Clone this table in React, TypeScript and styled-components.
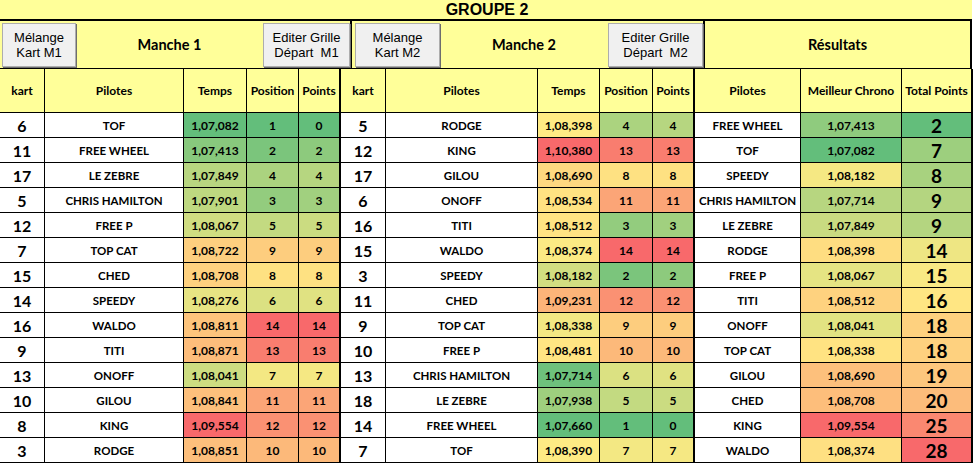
import React from 'react'
import styled, { createGlobalStyle } from 'styled-components'

type RGB = [number, number, number]
const GREEN: RGB = [99, 190, 123]
const YELLOW: RGB = [255, 235, 132]
const RED: RGB = [248, 105, 107]

// Excel-like 3 colour scale (min green, median yellow, max red)
const colorScale = (values: number[]) => {
  const s = [...values].sort((a, b) => a - b)
  const min = s[0]
  const max = s[s.length - 1]
  const idx = (s.length - 1) * 0.5
  const lo = Math.floor(idx)
  const mid = s[lo] + (s[Math.ceil(idx)] - s[lo]) * (idx - lo)
  const mix = (a: RGB, b: RGB, t: number) =>
    `rgb(${a.map((c, i) => Math.round(c + (b[i] - c) * t)).join(',')})`
  return (v: number) => {
    if (v <= mid) return mix(GREEN, YELLOW, mid === min ? 1 : (v - min) / (mid - min))
    return mix(YELLOW, RED, max === mid ? 0 : (v - mid) / (max - mid))
  }
}

const toSec = (t: string) => {
  const [m, s, ms] = t.split(',').map(Number)
  return m * 60 + s + ms / 1000
}

type Run = [number, string, string, number, number]

const manche1: Run[] = [
  [6, 'TOF', '1,07,082', 1, 0],
  [11, 'FREE WHEEL', '1,07,413', 2, 2],
  [17, 'LE ZEBRE', '1,07,849', 4, 4],
  [5, 'CHRIS HAMILTON', '1,07,901', 3, 3],
  [12, 'FREE P', '1,08,067', 5, 5],
  [7, 'TOP CAT', '1,08,722', 9, 9],
  [15, 'CHED', '1,08,708', 8, 8],
  [14, 'SPEEDY', '1,08,276', 6, 6],
  [16, 'WALDO', '1,08,811', 14, 14],
  [9, 'TITI', '1,08,871', 13, 13],
  [13, 'ONOFF', '1,08,041', 7, 7],
  [10, 'GILOU', '1,08,841', 11, 11],
  [8, 'KING', '1,09,554', 12, 12],
  [3, 'RODGE', '1,08,851', 10, 10],
]

const manche2: Run[] = [
  [5, 'RODGE', '1,08,398', 4, 4],
  [12, 'KING', '1,10,380', 13, 13],
  [17, 'GILOU', '1,08,690', 8, 8],
  [6, 'ONOFF', '1,08,534', 11, 11],
  [16, 'TITI', '1,08,512', 3, 3],
  [15, 'WALDO', '1,08,374', 14, 14],
  [3, 'SPEEDY', '1,08,182', 2, 2],
  [11, 'CHED', '1,09,231', 12, 12],
  [9, 'TOP CAT', '1,08,338', 9, 9],
  [10, 'FREE P', '1,08,481', 10, 10],
  [13, 'CHRIS HAMILTON', '1,07,714', 6, 6],
  [18, 'LE ZEBRE', '1,07,938', 5, 5],
  [14, 'FREE WHEEL', '1,07,660', 1, 0],
  [7, 'TOF', '1,08,390', 7, 7],
]

const results: [string, string, number][] = [
  ['FREE WHEEL', '1,07,413', 2],
  ['TOF', '1,07,082', 7],
  ['SPEEDY', '1,08,182', 8],
  ['CHRIS HAMILTON', '1,07,714', 9],
  ['LE ZEBRE', '1,07,849', 9],
  ['RODGE', '1,08,398', 14],
  ['FREE P', '1,08,067', 15],
  ['TITI', '1,08,512', 16],
  ['ONOFF', '1,08,041', 18],
  ['TOP CAT', '1,08,338', 18],
  ['GILOU', '1,08,690', 19],
  ['CHED', '1,08,708', 20],
  ['KING', '1,09,554', 25],
  ['WALDO', '1,08,374', 28],
]

const runScales = (runs: Run[]) => ({
  time: colorScale(runs.map(r => toSec(r[2]))),
  pos: colorScale(runs.map(r => r[3])),
  pts: colorScale(runs.map(r => r[4])),
})

const GlobalStyle = createGlobalStyle`
  body {
    margin: 0;
    background: #fff;
    font-family: Lato, "Liberation Sans", sans-serif;
    color: #000;
  }
`

const Page = styled.div`
  width: 972px;
`

const TitleBar = styled.div`
  height: 21px;
  box-sizing: border-box;
  background: #ffff99;
  border-bottom: 2px solid #000;
  display: flex;
  align-items: center;
  justify-content: center;
  font-family: "Liberation Sans", Arial, sans-serif;
  font-weight: bold;
  font-size: 16px;
  padding-left: 2px;
`

const ButtonBar = styled.div`
  height: 48px;
  box-sizing: border-box;
  display: flex;
  background: #ffff99;
  border-bottom: 1px solid #000;
`

const Section = styled.div<{ $w: number }>`
  width: ${p => p.$w}px;
  box-sizing: border-box;
  display: flex;
  align-items: center;
  border-right: 2px solid #000;
`

const SheetButton = styled.button<{ $w: number; $ml?: number }>`
  width: ${p => p.$w}px;
  margin-left: ${p => p.$ml ?? 0}px;
  height: 44px;
  flex: none;
  padding: 0;
  background: #f0f0f0;
  border: 1px solid #adadad;
  box-shadow: 1px 1px 0 #6d6d6d;
  font-family: "Liberation Sans", Arial, sans-serif;
  font-size: 13px;
  line-height: 15px;
  color: #000;
  white-space: pre;
  text-align: center;
`

const SectionLabel = styled.div`
  flex: 1;
  text-align: center;
  font-weight: bold;
  font-size: 14.5px;
`

const Grid = styled.div`
  display: grid;
  grid-template-columns: 45px 139px 63px 52px 42px 45px 152px 62px 53px 42px 106px 101px 71px;
  grid-template-rows: 44px;
  grid-auto-rows: 25px;
`

const Cell = styled.div<{ $bg?: string; $thick?: boolean; $size?: number }>`
  box-sizing: border-box;
  display: flex;
  align-items: center;
  justify-content: center;
  padding-top: 1px;
  background: ${p => p.$bg ?? '#fff'};
  border-right: ${p => (p.$thick ? 2 : 1)}px solid #000;
  border-bottom: 1px solid #000;
  font-weight: bold;
  font-size: ${p => p.$size ?? 12}px;
  white-space: nowrap;
  overflow: hidden;
`

const HeadCell = styled(Cell)`
  background: #ffff99;
  font-size: 12px;
  padding-top: 0;
`

const Name = styled(Cell)`
  font-size: 11.5px;
`

const headers = ['kart', 'Pilotes', 'Temps', 'Position', 'Points']

const App = () => {
  const s1 = runScales(manche1)
  const s2 = runScales(manche2)
  const bestScale = colorScale(results.map(r => toSec(r[1])))
  const totalScale = colorScale(results.map(r => r[2]))

  const runCells = (run: Run, sc: ReturnType<typeof runScales>, key: string) => [
    <Cell key={key + 'k'} $size={16}>{run[0]}</Cell>,
    <Name key={key + 'n'}>{run[1]}</Name>,
    <Cell key={key + 't'} $bg={sc.time(toSec(run[2]))}>{run[2]}</Cell>,
    <Cell key={key + 'p'} $bg={sc.pos(run[3])}>{run[3]}</Cell>,
    <Cell key={key + 'q'} $bg={sc.pts(run[4])} $thick>{run[4]}</Cell>,
  ]

  return (
    <Page>
      <GlobalStyle />
      <TitleBar>GROUPE 2</TitleBar>

      <ButtonBar>
        <Section $w={352}>
          <SheetButton $w={74} $ml={2}>{'Mélange\nKart M1'}</SheetButton>
          <SectionLabel>Manche 1</SectionLabel>
          <SheetButton $w={87}>{'Editer Grille\nDépart  M1'}</SheetButton>
        </Section>
        <Section $w={353}>
          <SheetButton $w={85} $ml={3}>{'Mélange\nKart M2'}</SheetButton>
          <SectionLabel>Manche 2</SectionLabel>
          <SheetButton $w={95}>{'Editer Grille\nDépart  M2'}</SheetButton>
        </Section>
        <Section $w={267}>
          <SectionLabel>Résultats</SectionLabel>
        </Section>
      </ButtonBar>

      <Grid>
        {headers.map((h, i) => <HeadCell key={'a' + h} $thick={i === 4}>{h}</HeadCell>)}
        {headers.map((h, i) => <HeadCell key={'b' + h} $thick={i === 4}>{h}</HeadCell>)}
        <HeadCell>Pilotes</HeadCell>
        <HeadCell>Meilleur Chrono</HeadCell>
        <HeadCell $thick>Total Points</HeadCell>

        {results.map((r, i) => [
          ...runCells(manche1[i], s1, 'm1-' + i),
          ...runCells(manche2[i], s2, 'm2-' + i),
          <Name key={'r-n' + i}>{r[0]}</Name>,
          <Cell key={'r-b' + i} $bg={bestScale(toSec(r[1]))}>{r[1]}</Cell>,
          <Cell key={'r-t' + i} $bg={totalScale(r[2])} $thick $size={19}>{r[2]}</Cell>,
        ])}
      </Grid>
    </Page>
  )
}

export default App
